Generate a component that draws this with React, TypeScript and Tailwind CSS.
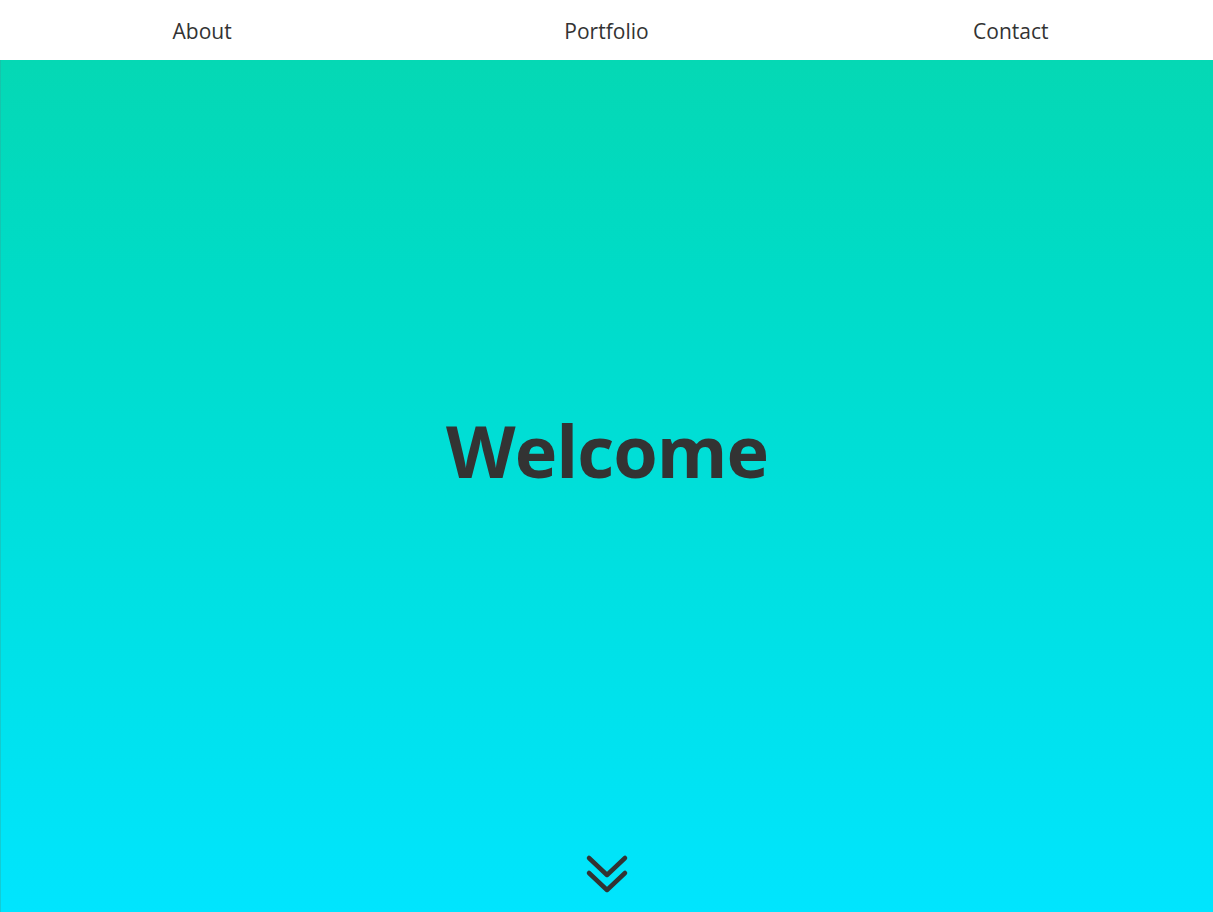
import React from "react";

export default function App() {
  return (
    <div className="w-[1213px] h-[912px] flex flex-col overflow-hidden" style={{ fontFamily: '"Open Sans", "Noto Sans", sans-serif' }}>
      <nav className="h-[60px] bg-white grid grid-cols-3 items-center shrink-0">
        {["About", "Portfolio", "Contact"].map((t) => (
          <div key={t} className="text-center text-[21px] text-[#333] pt-[4px]">{t}</div>
        ))}
      </nav>
      <main className="flex-1 flex flex-col items-center bg-gradient-to-b from-[#05d8b4] to-[#00e5fe] border-l border-[#2fa89a]/40">
        <div className="flex-1 flex items-center justify-center pb-[14px]">
          <h1 className="text-[72px] font-bold text-[#333] tracking-[-1px]">Welcome</h1>
        </div>
        <div className="pb-[14px]">
          <svg width="44" height="44" viewBox="0 0 44 44" fill="none" stroke="#333" strokeWidth="4.5" strokeLinecap="round" strokeLinejoin="round">
            <path d="M4 4 L22 21 L40 4" />
            <path d="M4 19 L22 36 L40 19" />
          </svg>
        </div>
      </main>
    </div>
  );
}
